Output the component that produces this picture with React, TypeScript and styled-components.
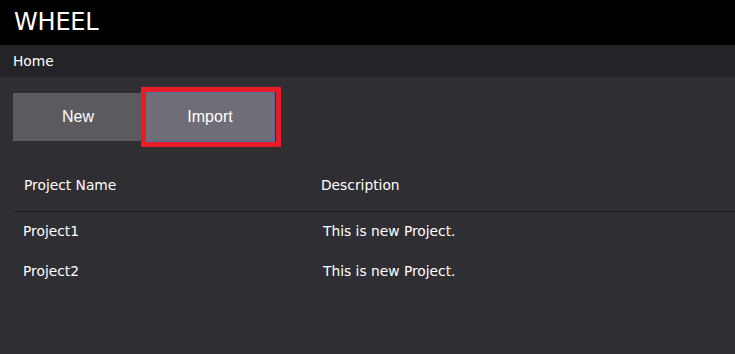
import styled, { createGlobalStyle } from "styled-components";

const GlobalCSS = createGlobalStyle`
  html, body, #root {
    margin: 0;
    padding: 0;
    height: 100%;
  }
  body {
    background-color: #2f2e33;
    font-family: "DejaVu Sans", Verdana, sans-serif;
    color: #ffffff;
  }
`;

const Wrapper = styled.div`
  display: flex;
  flex-direction: column;
  height: 100vh;
  width: 100vw;
  overflow: hidden;
  background-color: #2f2e33;
`;

const Header = styled.header`
  height: 45px;
  background-color: #000000;
  display: flex;
  align-items: center;
  padding: 0 14px;
  box-sizing: border-box;
`;

const Title = styled.h1`
  margin: 0;
  font-size: 24px;
  font-weight: normal;
  letter-spacing: -0.2px;
  padding-bottom: 1px;
`;

const Breadcrumb = styled.nav`
  height: 32px;
  background-color: #242428;
  display: flex;
  align-items: center;
  padding: 0 13px 1px;
  box-sizing: border-box;
  font-size: 13.8px;
`;

const Main = styled.main`
  flex: 1;
  padding: 15px 0 0 13px;
`;

const Toolbar = styled.div`
  display: flex;
  align-items: center;
  gap: 2px;
  height: 50px;
`;

const Button = styled.button<{ $active?: boolean }>`
  position: relative;
  width: 130px;
  height: ${({ $active }) => ($active ? "50px" : "48px")};
  box-sizing: border-box;
  border: ${({ $active }) => ($active ? "1px solid #4b6ea8" : "none")};
  background-color: ${({ $active }) => ($active ? "#6f6e78" : "#5b5a5f")};
  color: #ffffff;
  font-family: "Liberation Sans", Arial, sans-serif;
  font-size: 16px;
  padding: 0;
  cursor: pointer;
`;

const Highlight = styled.span`
  position: absolute;
  left: -5px;
  top: -6px;
  right: -7px;
  bottom: -6px;
  border: 5px solid #e81c25;
  pointer-events: none;
`;

const Table = styled.div`
  margin-top: 16px;
  display: flex;
  flex-direction: column;
`;

const Row = styled.div<{ $head?: boolean }>`
  display: grid;
  grid-template-columns: 297px 1fr;
  align-items: center;
  height: ${({ $head }) => ($head ? "54px" : "40px")};
  padding-bottom: ${({ $head }) => ($head ? "0" : "3px")};
  border-bottom: ${({ $head }) => ($head ? "1px solid #1e1d21" : "none")};
  box-sizing: border-box;
  font-size: 13.8px;
`;

const Cell = styled.div<{ $indent: number }>`
  padding-left: ${({ $indent }) => $indent}px;
  white-space: nowrap;
`;

const projects = [
  { name: "Project1", description: "This is new Project." },
  { name: "Project2", description: "This is new Project." },
];

export default function App() {
  return (
    <>
      <GlobalCSS />
      <Wrapper>
        <Header>
          <Title>WHEEL</Title>
        </Header>
        <Breadcrumb>Home</Breadcrumb>
        <Main>
          <Toolbar>
            <Button>New</Button>
            <Button $active>
              Import
              <Highlight />
            </Button>
          </Toolbar>
          <Table>
            <Row $head>
              <Cell $indent={11}>Project Name</Cell>
              <Cell $indent={11}>Description</Cell>
            </Row>
            {projects.map((p) => (
              <Row key={p.name}>
                <Cell $indent={10}>{p.name}</Cell>
                <Cell $indent={13}>{p.description}</Cell>
              </Row>
            ))}
          </Table>
        </Main>
      </Wrapper>
    </>
  );
}
